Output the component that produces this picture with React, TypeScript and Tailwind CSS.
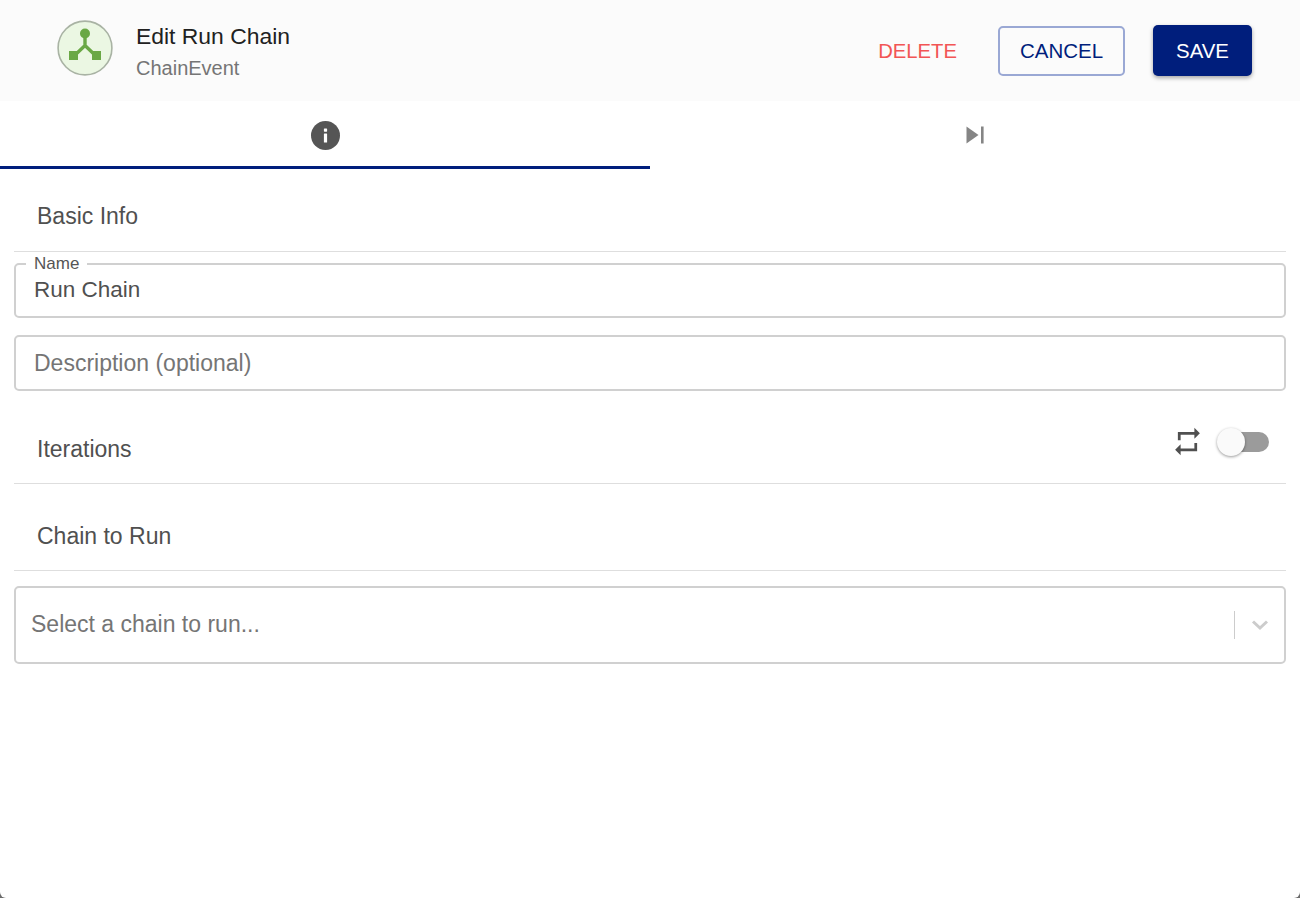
import { useState } from "react";

const font = "font-['Liberation_Sans',Arial,sans-serif]";

function SectionTitle({ title }: { title: string }) {
  return <h2 className="text-[23px] leading-[26px] text-[#505050]">{title}</h2>;
}

function ChainIcon() {
  return (
    <svg width="56" height="56" viewBox="0 0 56 56" className="mb-[5px] block">
      <circle cx="28" cy="28" r="26.9" fill="#ebf7e3" stroke="#a9b3a4" strokeWidth="1.6" />
      <circle cx="28" cy="13.5" r="5" fill="#6aa845" />
      <path d="M28 16v10.5M28 25.5L16.5 36.5M28 25.5L39.5 36.5" stroke="#6aa845" strokeWidth="3.4" fill="none" />
      <rect x="12" y="31" width="9" height="9" fill="#6aa845" />
      <rect x="35" y="31" width="9" height="9" fill="#6aa845" />
    </svg>
  );
}

export default function App() {
  const [name, setName] = useState("Run Chain");
  const [iterate, setIterate] = useState(false);

  return (
    <div className={`${font} h-[898px] w-full bg-[#6b6b6b]`}>
      <div className="flex h-full flex-col overflow-hidden rounded-b-[6px] bg-white">
        {/* Header */}
        <header className="flex h-[101px] shrink-0 items-center bg-[#fbfbfb] pl-[57px] pr-[48px]">
          <ChainIcon />
          <div className="ml-[23px] flex-1">
            <div className="text-[22.9px] leading-[28px] text-[#212121]">Edit Run Chain</div>
            <div className="mt-[6px] text-[20px] leading-[24px] text-[#757575]">ChainEvent</div>
          </div>
          <button className="mr-[41px] pt-[1px] text-[20.25px] text-[#f25555]">DELETE</button>
          <button className="mr-[28px] h-[50px] w-[127px] rounded-[5px] border-2 border-[#9aa8d4] pt-[1px] text-[20.5px] text-[#001e7c]">
            CANCEL
          </button>
          <button className="h-[51px] w-[99px] rounded-[5px] bg-[#001e7c] pt-[1px] text-[20.4px] text-white shadow-[0_2px_4px_rgba(0,0,0,0.35)]">
            SAVE
          </button>
        </header>

        {/* Tabs */}
        <div className="flex h-[68px] shrink-0">
          <button className="flex h-full w-1/2 items-center justify-center border-b-[3px] border-[#001e7c] pt-[3px]">
            <svg width="29" height="29" viewBox="0 0 29 29">
              <circle cx="14.5" cy="14.5" r="14.5" fill="#555555" />
              <rect x="12.9" y="7.5" width="3.2" height="3.2" rx="0.6" fill="#fff" />
              <rect x="12.9" y="12.6" width="3.2" height="9" rx="0.4" fill="#fff" />
            </svg>
          </button>
          <button className="flex h-full w-1/2 items-center justify-center">
            <svg width="18" height="18" viewBox="0 0 18 18">
              <path d="M0.5 0.5L12.5 9L0.5 17.5Z" fill="#858585" />
              <rect x="15" y="0.5" width="2.6" height="17" fill="#858585" />
            </svg>
          </button>
        </div>

        {/* Form */}
        <div className="flex flex-col px-[14px]">
          <div className="border-b border-[#dedede] pl-[23px] pt-[34px] pb-[22px]">
            <SectionTitle title="Basic Info" />
          </div>

          <fieldset className="mt-[4px] h-[62px] rounded-[5px] border-2 border-[#d0d0d0] pl-[10px] pr-[18px]">
            <legend className="px-[8px] text-[17px] leading-[15px] text-[#555555]">Name</legend>
            <input
              value={name}
              onChange={(e) => setName(e.target.value)}
              className="mt-[1px] block h-[36px] w-full pl-[8px] text-[22.5px] text-[#505050] outline-none"
            />
          </fieldset>

          <input
            placeholder="Description (optional)"
            className="mt-[17px] h-[56px] rounded-[5px] border-2 border-[#d0d0d0] px-[18px] pt-[1px] text-[23px] text-[#505050] outline-none placeholder:text-[#757575]"
          />

          <div className="flex h-[93px] items-start justify-between border-b border-[#dedede] pl-[23px] pr-[17px]">
            <div className="pt-[45px]">
              <SectionTitle title="Iterations" />
            </div>
            <div className="flex items-center pt-[34px]">
              <svg width="33" height="33" viewBox="0 0 24 24" className="mr-[27px]">
                <path
                  d="M7 7h10v3l4-4-4-4v3H5v6h2V7zm10 10H7v-3l-4 4 4 4v-3h12v-6h-2v4z"
                  fill="#505050"
                />
              </svg>
              <button
                onClick={() => setIterate(!iterate)}
                className="relative h-[20px] w-[38px] rounded-full bg-[#9b9b9b]"
              >
                <span className="absolute left-[-14px] top-[-4px] h-[28px] w-[28px] rounded-full bg-[#fafafa] shadow-[0_1px_3px_rgba(0,0,0,0.4)]" />
              </button>
            </div>
          </div>

          <div className="border-b border-[#dedede] pl-[23px] pt-[39px] pb-[21px]">
            <SectionTitle title="Chain to Run" />
          </div>

          <div className="mt-[15px] flex h-[78px] items-center rounded-[5px] border-2 border-[#d0d0d0] pl-[15px] pr-[15px]">
            <span className="flex-1 pb-[2px] text-[23px] text-[#757575]">Select a chain to run...</span>
            <span className="mr-[16px] h-[28px] w-px bg-[#cccccc]" />
            <svg width="18" height="12" viewBox="0 0 18 12">
              <path d="M2 2.5L9 9L16 2.5" stroke="#cccccc" strokeWidth="3" fill="none" />
            </svg>
          </div>
        </div>
      </div>
    </div>
  );
}
